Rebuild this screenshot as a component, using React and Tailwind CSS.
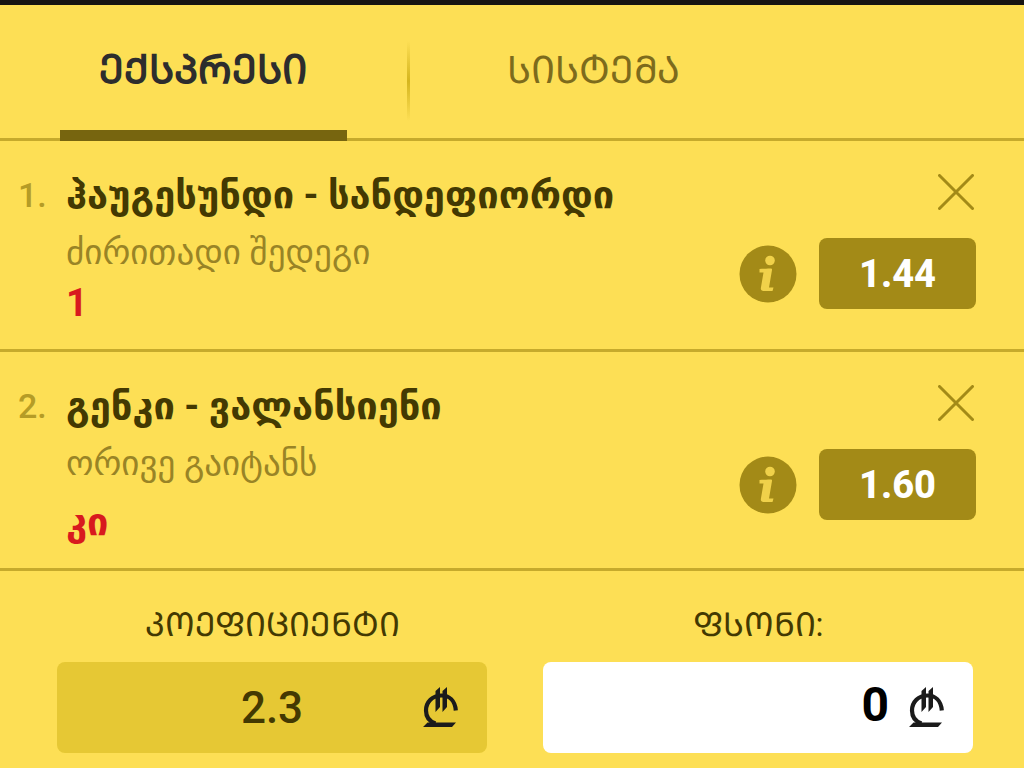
import React, { useState } from 'react';

const bets = [
  {
    id: 1,
    match: 'ჰაუგესუნდი - სანდეფიორდი',
    market: 'ძირითადი შედეგი',
    pick: '1',
    odd: '1.44',
  },
  {
    id: 2,
    match: 'გენკი - ვალანსიენი',
    market: 'ორივე გაიტანს',
    pick: 'კი',
    odd: '1.60',
  },
];

const LariIcon = () => (
  <svg
    className="mb-0.5 h-10 w-9 shrink-0"
    viewBox="0 0 36 40"
    aria-hidden="true"
  >
    <path
      d="M32.800 23.500C32 13.500 26 8.500 18.500 8.500 9.500 8.500 3 15 3 23.500c0 6.500 3.500 11 9.500 13"
      fill="none"
      stroke="#1b1b1b"
      strokeWidth="4.200"
    />
    <path
      fill="#1b1b1b"
      d="M12.500 4 17 0v20l-4.500 5zM19.500 4 24 0v20l-4.500 5zM0 40l4.500-4.500H33L29 40z"
    />
  </svg>
);

const InfoIcon = () => (
  <svg className="h-[58px] w-[58px]" viewBox="0 0 58 58" aria-hidden="true">
    <circle cx="29" cy="29" r="28.500" fill="#a38a17" />
    <circle cx="31" cy="15.500" r="4.800" fill="#f0d14a" />
    <path
      fill="#f0d14a"
      d="M20.500 24c4-.3 6-.3 11.500-.5.8 0 1.200.5 1 1.500L30 42.500h4.500L33.500 46H24.500c-2 0-3-1.200-2.600-3.200L24.500 27.500h-4z"
    />
  </svg>
);

const CloseIcon = () => (
  <svg className="h-9 w-9" viewBox="0 0 36 36" aria-hidden="true">
    <path
      d="M1.500 1.500l33 33M34.500 1.500l-33 33"
      stroke="#a38a17"
      strokeWidth="3"
      strokeLinecap="round"
    />
  </svg>
);

const BetItem = ({ bet, onRemove }) => (
  <li className="flex border-b-3 border-[#c6aa2c] pt-8 pr-12 pb-6 pl-[18px]">
    <span className="w-12 shrink-0 text-[34px] leading-[44px] font-medium text-[#b59c26]">
      {bet.id}.
    </span>
    <div className="min-w-0 flex-1">
      <h2 className="text-[38px] leading-[44px] font-bold text-[#433902]">
        {bet.match}
      </h2>
      <p className="mt-3.5 text-[35px] leading-[44px] text-[#998426]">
        {bet.market}
      </p>
      <p
        className={
          'text-[38px] leading-[44px] font-bold text-[#d81a1e] ' +
          (isNaN(bet.pick) ? 'mt-3.5' : 'mt-1.5')
        }
      >
        {bet.pick}
      </p>
    </div>
    <div className="flex flex-col items-end gap-7 pt-px">
      <button
        className="mr-0.5"
        aria-label="წაშლა"
        onClick={() => onRemove(bet.id)}
      >
        <CloseIcon />
      </button>
      <div className="flex items-center gap-[22px]">
        <button aria-label="ინფორმაცია">
          <InfoIcon />
        </button>
        <span className="flex h-[71px] w-[157px] items-center justify-center rounded-lg bg-[#a38a17] text-[38px] leading-none font-extrabold text-white">
          {bet.odd}
        </span>
      </div>
    </div>
  </li>
);

const App = () => {
  const [tab, setTab] = useState('express');
  const [items, setItems] = useState(bets);
  const [stake, setStake] = useState('0');

  return (
    <main className="min-h-screen border-t-5 border-[#171512] bg-[#fddf55] font-['Roboto','Noto_Sans','DejaVu_Sans',sans-serif]">
      <nav className="flex h-[136px] border-b-3 border-[#c6aa2c]">
        <div className="flex w-[39.7%] justify-center">
          <button
            className={
              '-mb-[3px] w-[287px] border-b-11 pt-1 text-[40px] font-bold ' +
              (tab === 'express'
                ? 'border-[#77650f] text-[#2d2d2d]'
                : 'border-transparent text-[#7d6b1c]')
            }
            onClick={() => setTab('express')}
          >
            ᲔᲥᲡᲞᲠᲔᲡᲘ
          </button>
        </div>
        <div className="mt-9 h-20 w-[3px] bg-linear-to-b from-transparent via-[#d5b51e] to-transparent" />
        <div className="flex w-[36%] justify-center">
          <button
            className={
              '-mb-[3px] w-[287px] border-b-11 pt-1.5 text-[38px] ' +
              (tab === 'system'
                ? 'border-[#77650f] text-[#2d2d2d]'
                : 'border-transparent text-[#7d6b1c]')
            }
            onClick={() => setTab('system')}
          >
            ᲡᲘᲡᲢᲔᲛᲐ
          </button>
        </div>
      </nav>

      <ul>
        {items.map((bet) => (
          <BetItem
            key={bet.id}
            bet={bet}
            onRemove={(id) => setItems(items.filter((b) => b.id !== id))}
          />
        ))}
      </ul>

      <div className="grid grid-cols-2 gap-14 pt-8 pr-[51px] pb-3 pl-[57px]">
        <div>
          <h3 className="text-center text-[33px] leading-[44px] text-[#433902]">
            ᲙᲝᲔᲤᲘᲪᲘᲔᲜᲢᲘ
          </h3>
          <div className="mt-[15px] flex h-[91px] items-center rounded-lg bg-[#e6c834] pr-7 pl-16">
            <output className="flex-1 text-center text-[44px] font-medium text-[#433902]">
              2.3
            </output>
            <LariIcon />
          </div>
        </div>
        <div>
          <label
            htmlFor="stake"
            className="block text-center text-[33px] leading-[44px] text-[#433902]"
          >
            ᲤᲡᲝᲜᲘ:
          </label>
          <div className="mt-[15px] flex h-[91px] items-center gap-5 rounded-lg bg-white pr-7">
            <input
              id="stake"
              className="min-w-0 flex-1 pb-1.5 text-right text-5xl font-bold text-black outline-none"
              value={stake}
              onChange={(e) => setStake(e.target.value)}
            />
            <LariIcon />
          </div>
        </div>
      </div>
    </main>
  );
};

export default App;
